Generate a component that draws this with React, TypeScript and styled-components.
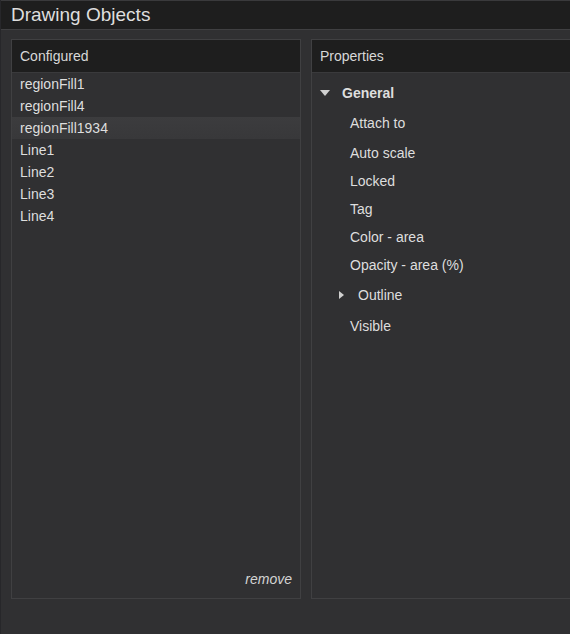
import React from "react";
import styled, { createGlobalStyle } from "styled-components";

const Global = createGlobalStyle`
  html, body { margin: 0; padding: 0; background: #303032; }
  body { font-family: "Liberation Sans", Arial, sans-serif; color: #dcdcdc; }
`;

const Page = styled.div`
  width: 570px;
  height: 634px;
  background: #303032;
  overflow: hidden;
  border-left: 1px solid #27272a;
  box-sizing: border-box;
`;

const TitleBar = styled.div`
  height: 28px;
  border-top: 1px solid #3a3a3c;
  border-bottom: 1px solid #404042;
  background: #1e1e1e;
  padding-left: 10px;
  font-size: 19px;
  line-height: 28px;
  color: #dedede;
`;

const Body = styled.div`
  display: flex;
  gap: 10px;
  padding: 9px 0 0 10px;
`;

const Panel = styled.div<{ $width: number; $open?: boolean }>`
  flex: 0 0 ${(p) => p.$width}px;
  height: 560px;
  box-sizing: border-box;
  border: 1px solid #404042;
  ${(p) => (p.$open ? "border-right: none;" : "")}
  display: flex;
  flex-direction: column;
`;

const PanelHeader = styled.div`
  height: 32px;
  background: #1e1e1e;
  border-bottom: 1px solid #3a3a3c;
  padding-left: 8px;
  font-size: 14px;
  line-height: 32px;
  color: #d8d8d8;
  flex: none;
`;

const List = styled.div`
  flex: 1;
  display: flex;
  flex-direction: column;
`;

const ListItem = styled.div<{ $selected?: boolean }>`
  height: 22px;
  line-height: 22px;
  padding-left: 8px;
  font-size: 14px;
  color: #dedede;
  background: ${(p) =>
    p.$selected ? "linear-gradient(#3c3c3e, #38383a)" : "transparent"};
`;

const Footer = styled.div`
  display: flex;
  justify-content: flex-end;
  padding: 0 8px 11px 0;
`;

const RemoveLink = styled.span`
  font-style: italic;
  font-size: 14px;
  color: #d4d4d4;
`;

const Tree = styled.div`
  padding-top: 5px;
  display: flex;
  flex-direction: column;
`;

const TreeRow = styled.div<{ $h: number; $indent: number; $bold?: boolean }>`
  height: ${(p) => p.$h}px;
  display: flex;
  align-items: center;
  padding-left: ${(p) => p.$indent}px;
  font-size: 14px;
  font-weight: ${(p) => (p.$bold ? 700 : 400)};
  color: #dedede;
`;

const Caret = styled.span<{ $open?: boolean }>`
  display: inline-block;
  width: 0;
  height: 0;
  ${(p) =>
    p.$open
      ? `border-left: 5px solid transparent;
         border-right: 5px solid transparent;
         border-top: 6px solid #d0d0d0;
         margin-right: 12px;`
      : `border-top: 4px solid transparent;
         border-bottom: 4px solid transparent;
         border-left: 5px solid #d0d0d0;
         margin-right: 14px;`}
`;

const items = [
  "regionFill1",
  "regionFill4",
  "regionFill1934",
  "Line1",
  "Line2",
  "Line3",
  "Line4",
];

const props: { label: string; h: number }[] = [
  { label: "Attach to", h: 30 },
  { label: "Auto scale", h: 29 },
  { label: "Locked", h: 28 },
  { label: "Tag", h: 28 },
  { label: "Color - area", h: 28 },
  { label: "Opacity - area (%)", h: 28 },
];

export default function App() {
  return (
    <Page>
      <Global />
      <TitleBar>Drawing Objects</TitleBar>
      <Body>
        <Panel $width={290}>
          <PanelHeader>Configured</PanelHeader>
          <List>
            {items.map((it) => (
              <ListItem key={it} $selected={it === "regionFill1934"}>
                {it}
              </ListItem>
            ))}
          </List>
          <Footer>
            <RemoveLink>remove</RemoveLink>
          </Footer>
        </Panel>
        <Panel $width={290} $open>
          <PanelHeader>Properties</PanelHeader>
          <Tree>
            <TreeRow $h={30} $indent={8} $bold>
              <Caret $open />
              General
            </TreeRow>
            {props.map((p) => (
              <TreeRow key={p.label} $h={p.h} $indent={38}>
                {p.label}
              </TreeRow>
            ))}
            <TreeRow $h={32} $indent={27}>
              <Caret />
              Outline
            </TreeRow>
            <TreeRow $h={30} $indent={38}>
              Visible
            </TreeRow>
          </Tree>
        </Panel>
      </Body>
    </Page>
  );
}
